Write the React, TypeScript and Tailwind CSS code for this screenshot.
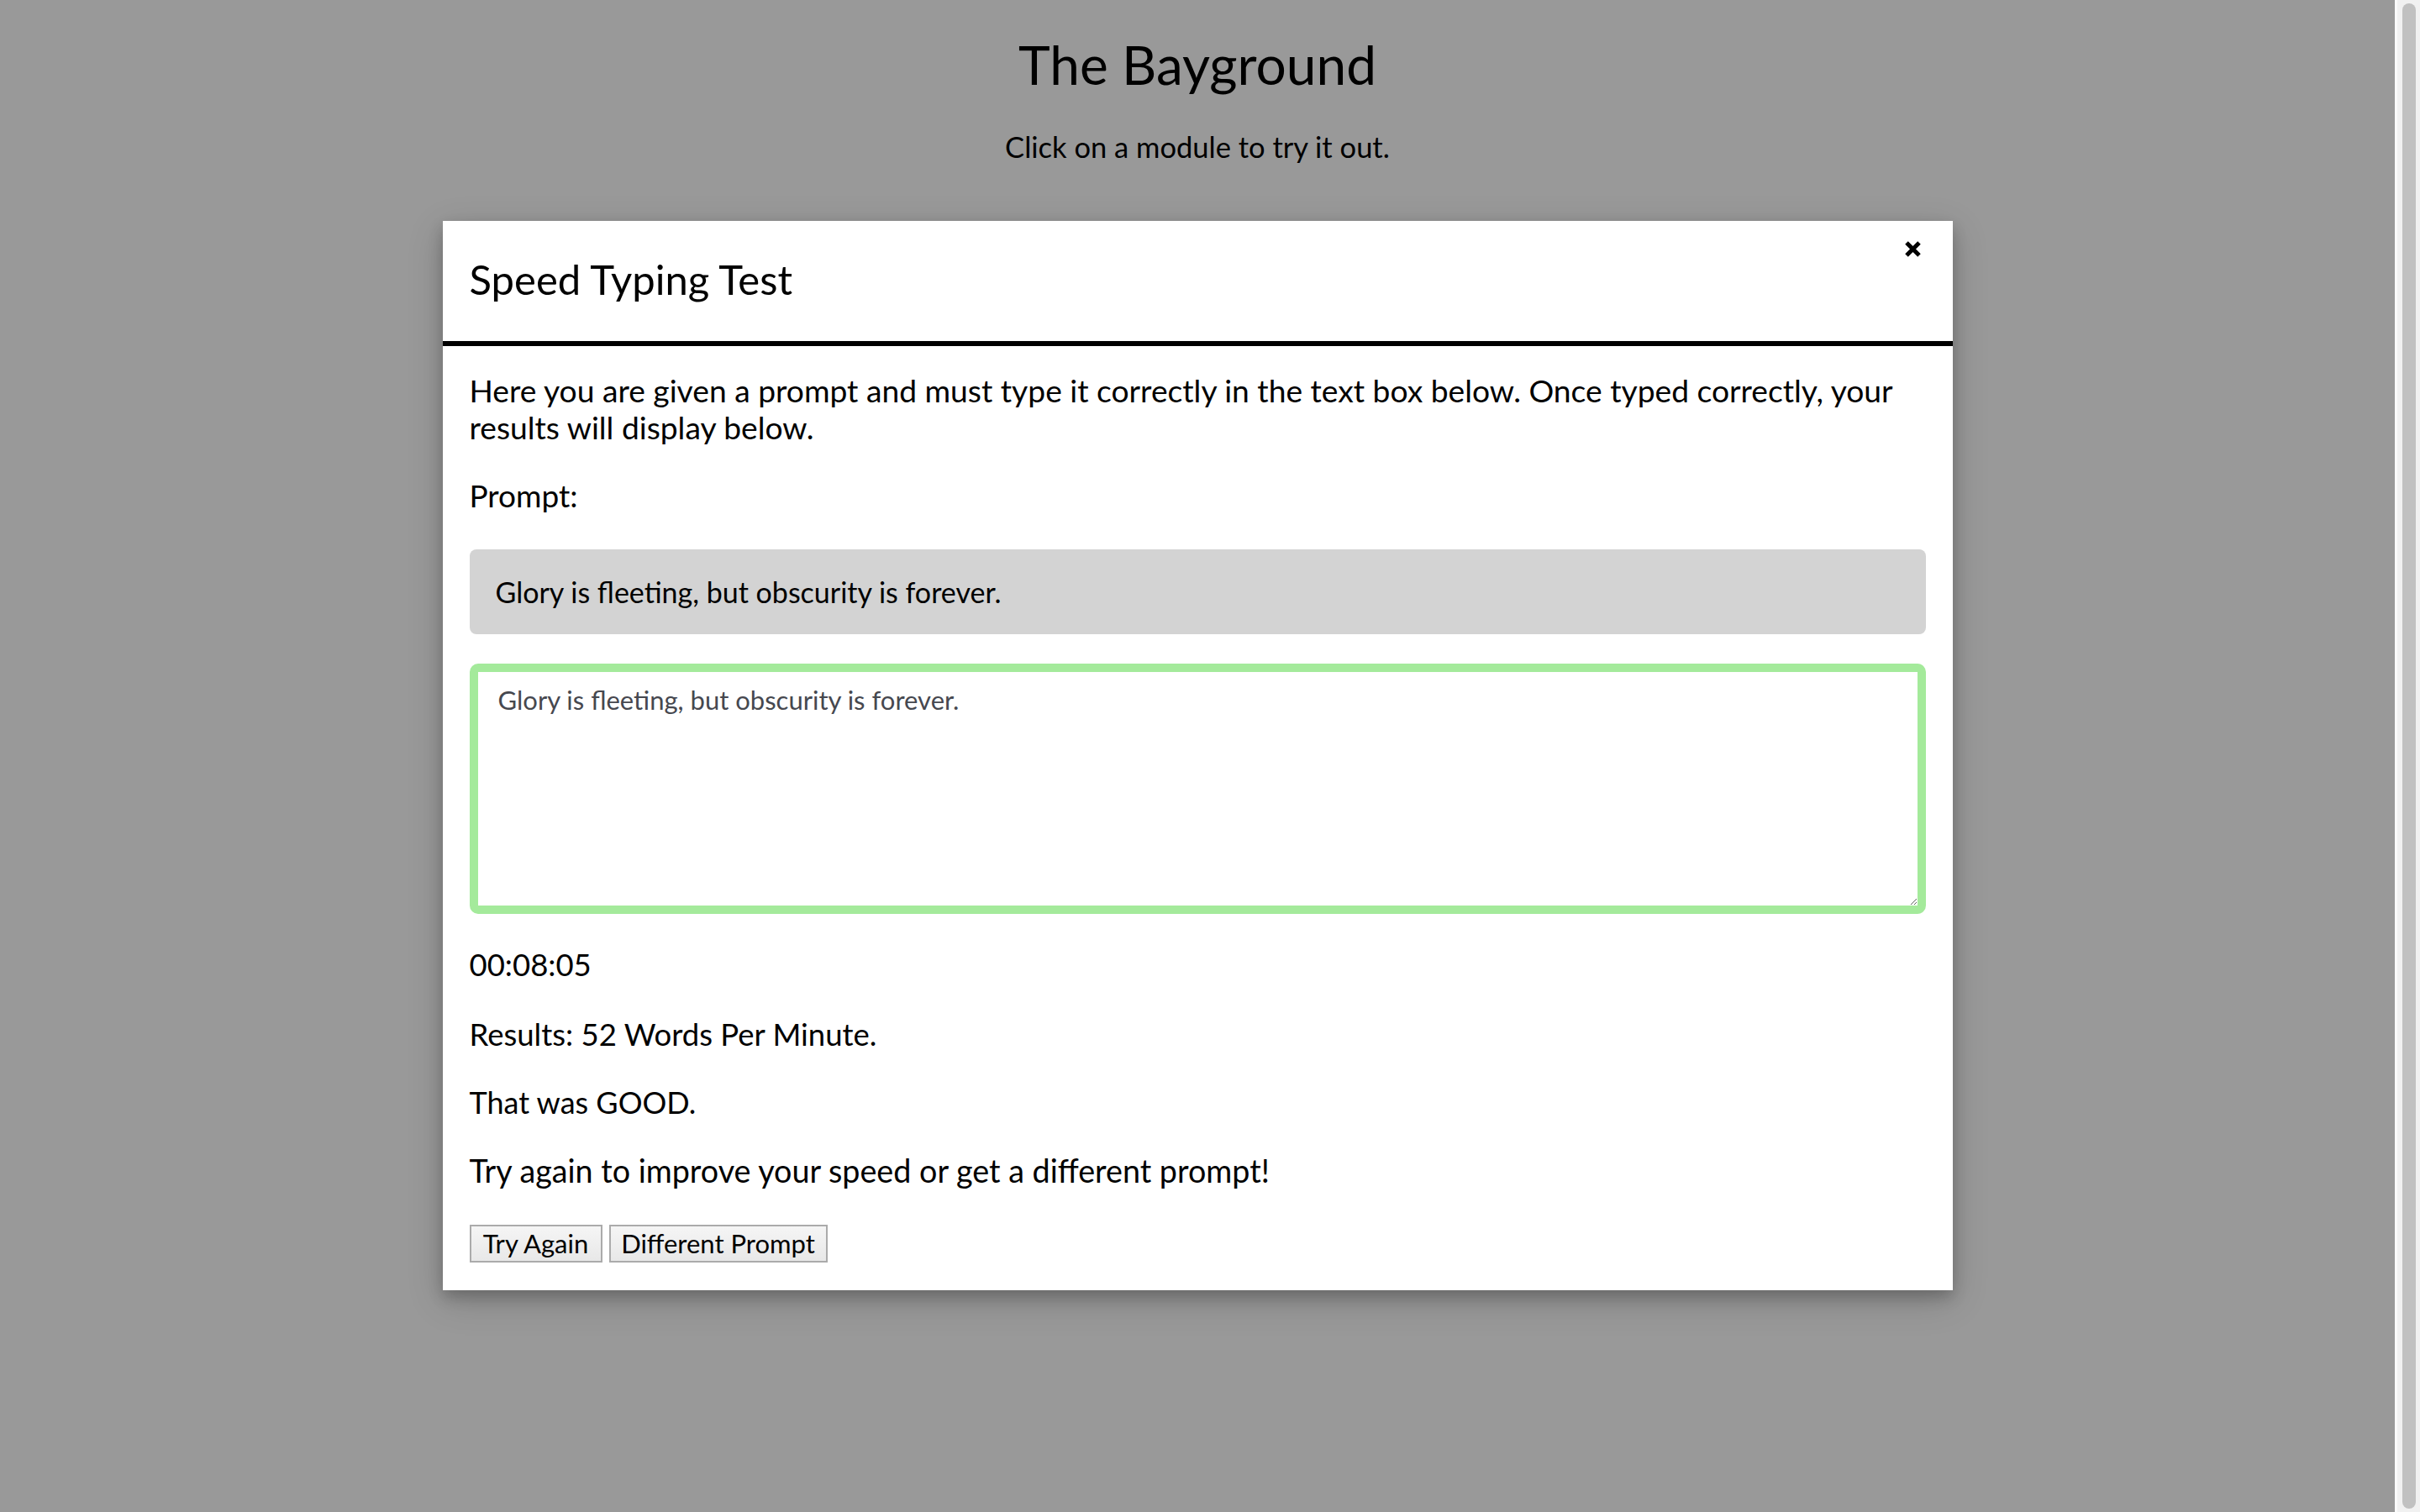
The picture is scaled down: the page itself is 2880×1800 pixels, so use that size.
import React from "react";

const font = { fontFamily: "Lato, 'Noto Sans', sans-serif" };

export default function App() {
  return (
    <div className="flex h-[1800px] w-full overflow-hidden bg-[#999999]" style={font}>
      <div className="flex flex-1 flex-col items-center text-black">
        <h1 className="mt-[37px] text-[64px] leading-[80px] font-normal">The Bayground</h1>
        <p className="mt-[38px] text-[34.5px] leading-[40px]">Click on a module to try it out.</p>

        <div className="relative mt-[68px] w-[1797px] bg-white shadow-[0_8px_16px_0_rgba(0,0,0,0.2),0_12px_40px_0_rgba(0,0,0,0.19)]">
          <div className="flex h-[149px] items-center border-b-[6px] border-black px-[32px] pb-[5px]">
            <h2 className="text-[49px] leading-[60px] font-normal">Speed Typing Test</h2>
          </div>
          <svg
            className="absolute right-[37px] top-[23px] h-[21px] w-[21px]"
            viewBox="0 0 21 21"
          >
            <path d="M3 3 L18 18 M18 3 L3 18" stroke="#000" strokeWidth="5" strokeLinecap="butt" />
          </svg>

          <div className="px-[32px] pb-[33px]">
            <p className="mt-[31px] text-[37.2px] leading-[44px]">
              Here you are given a prompt and must type it correctly in the text box below. Once typed correctly, your results will display below.
            </p>
            <p className="mt-[37px] text-[37px] leading-[44px]">Prompt:</p>
            <div className="mt-[42px] flex h-[101px] items-center rounded-[8px] bg-[#d3d3d3] px-[31px] text-[34px]">
              Glory is fleeting, but obscurity is forever.
            </div>
            <textarea
              readOnly
              defaultValue="Glory is fleeting, but obscurity is forever."
              className="mt-[35px] block h-[298px] w-full resize-y rounded-[10px] border-[10px] border-[#a4ea9b] bg-white px-[24px] pt-[15px] text-[31px] leading-[36px] text-[#46484f] outline-none"
              style={font}
            />
            <p className="mt-[38px] text-[36.5px] leading-[44px]">00:08:05</p>
            <p className="mt-[39px] text-[36.5px] leading-[44px]">Results: 52 Words Per Minute.</p>
            <p className="mt-[37px] text-[36px] leading-[44px]">That was GOOD.</p>
            <p className="mt-[38px] text-[37.7px] leading-[44px]">Try again to improve your speed or get a different prompt!</p>
            <div className="mt-[42px] flex gap-[8px]">
              <button className="h-[45px] w-[158px] border-[2px] border-[#ababab] bg-gradient-to-b from-[#f5f5f5] to-[#e8e8e8] pb-[2px] text-[31px] leading-[36px] text-black">
                Try Again
              </button>
              <button className="h-[45px] w-[260px] border-[2px] border-[#ababab] bg-gradient-to-b from-[#f5f5f5] to-[#e8e8e8] pb-[2px] text-[31px] leading-[36px] text-black">
                Different Prompt
              </button>
            </div>
          </div>
        </div>
      </div>
      <div className="flex w-[30px] justify-center border-l-[3px] border-[#fafafa] bg-[#f1f1f1] py-[4px]">
        <div className="w-[16px] rounded-full bg-[#c1c1c1]" />
      </div>
    </div>
  );
}
